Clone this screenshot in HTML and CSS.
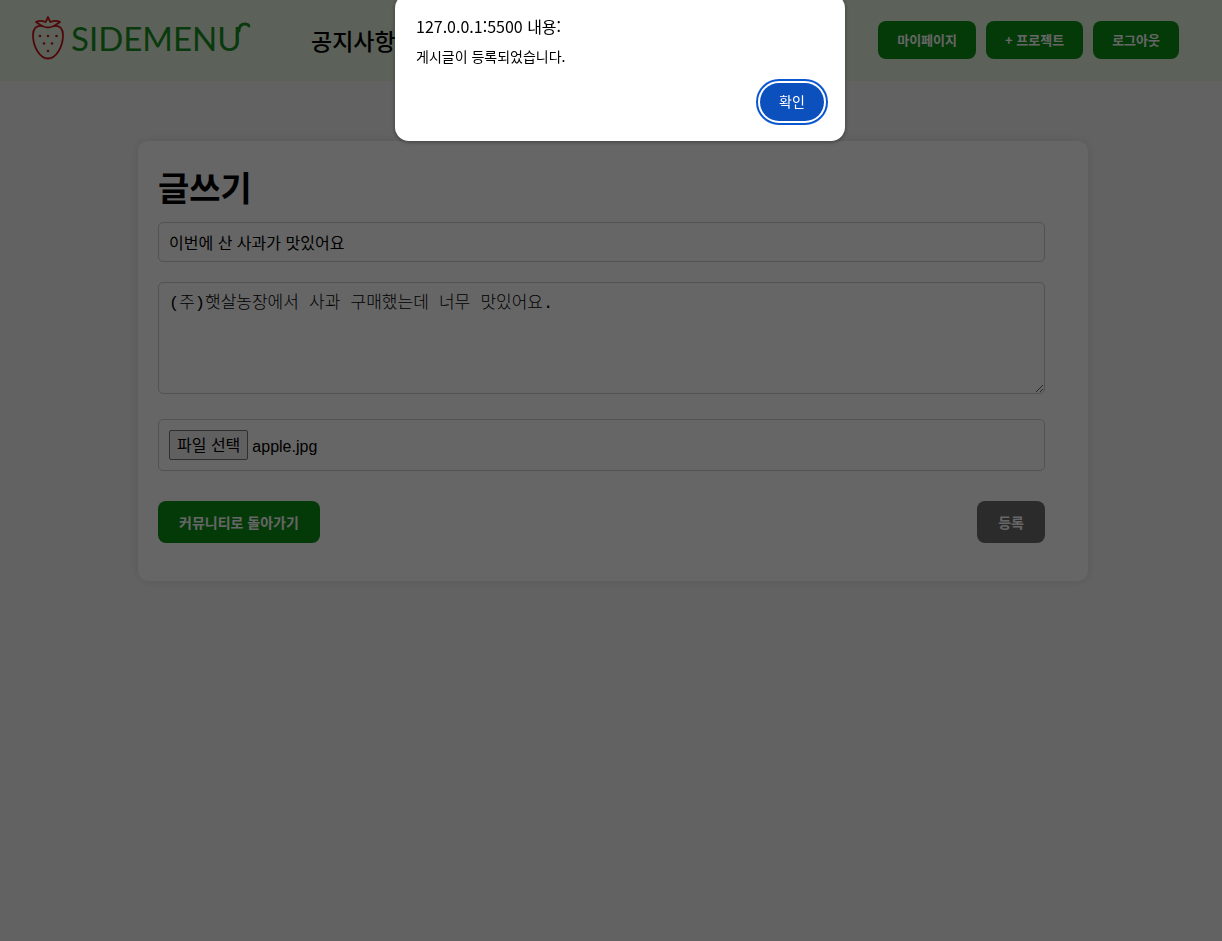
FILE: index.html
```
<!DOCTYPE html>
<html lang="ko">
<head>
<meta charset="utf-8">
<meta name="viewport" content="width=device-width, initial-scale=1">
<title>글쓰기</title>
<link rel="stylesheet" href="styles.css">
</head>
<body>
<header class="header">
  <a class="logo" href="#" aria-label="SIDEMENU">
    <svg class="logo-image" viewBox="0 0 220 50" width="220" height="50" fill="none" stroke-linecap="round" stroke-linejoin="round">
      <g stroke="#c8171c" stroke-width="1.8">
        <path d="M11 11 C5 10 2 14 2 20 C2 32 9 43.5 17 43.5 C25 43.5 32 32 32 20 C32 14 29 10 23 11 C20 12 19 12.5 17 12.5 C15 12.5 14 12 11 11Z"/>
        <path d="M11 11 L5 7 C8 5.5 11 5.5 14.5 7 C15.5 5 16.5 4 17 2 C17.5 4 18.5 5 19.5 7 C23 5.5 26 5.5 29 7 L23 11"/>
      </g>
      <g fill="#c8171c">
        <circle cx="9" cy="21" r="1.3"/><circle cx="17" cy="21" r="1.3"/><circle cx="25.5" cy="21" r="1.3"/>
        <circle cx="13" cy="28.5" r="1.3"/><circle cx="21" cy="28.5" r="1.3"/><circle cx="17" cy="36" r="1.3"/>
      </g>
      <text class="logo-text" x="40" y="36">SIDEMENU</text>
      <path d="M208 16 C208 10.500 211 9 214 9 Q217 9 218 11" stroke="#1a9025" stroke-width="2.8"/>
    </svg>
  </a>
  <nav class="nav"><a href="#">공지사항</a></nav>
  <div class="account">
    <button class="button button-small" type="button">마이페이지</button>
    <button class="button button-small" type="button">+ 프로젝트</button>
    <button class="button button-small" type="button">로그아웃</button>
  </div>
</header>
<main class="main">
  <form class="card">
    <h1 class="title">글쓰기</h1>
    <input class="field" type="text" aria-label="제목" value="이번에 산 사과가 맛있어요">
    <textarea class="field content" aria-label="내용">(주)햇살농장에서 사과 구매했는데 너무 맛있어요.</textarea>
    <div class="field file">
      <input class="file-input" id="file" type="file" aria-label="파일">
      <label class="file-button" for="file">파일 선택</label>
      <span class="file-name">apple.jpg</span>
    </div>
    <div class="actions">
      <button class="button" type="button">커뮤니티로 돌아가기</button>
      <button class="button button-submit" type="submit">등록</button>
    </div>
  </form>
</main>
<div class="backdrop"></div>
<div class="alert" role="alertdialog" aria-labelledby="alert-title" aria-describedby="alert-message">
  <h2 class="alert-title" id="alert-title">127.0.0.1:5500 내용:</h2>
  <p class="alert-message" id="alert-message">게시글이 등록되었습니다.</p>
  <button class="alert-confirm" type="button">확인</button>
</div>
</body>
</html>
```
FILE: styles.css
```
* {
  box-sizing: border-box;
}

body {
  margin: 0;
  min-height: 100vh;
  background: #f5f5f5;
  color: #000;
  font-family: "Noto Sans CJK KR", sans-serif;
}

button,
input {
  font-family: inherit;
}

.header {
  display: flex;
  align-items: center;
  height: 81px;
  padding: 0 43px 2px 31px;
  background: #e6f5de;
}

.logo {
  display: block;
  height: 50px;
}

.logo-image {
  display: block;
}

.logo-text {
  fill: #1a9025;
  font: 33px Lato, sans-serif;
}

.nav {
  margin-left: 60px;
}

.nav a {
  color: #000;
  font-size: 23px;
  font-weight: 500;
  text-decoration: none;
}

.account {
  display: flex;
  gap: 10px;
  margin-left: auto;
}

.button {
  height: 42px;
  padding: 0 21px;
  border: 0;
  border-radius: 8px;
  background: #0a9015;
  color: #fff;
  font-size: 14px;
  font-weight: 700;
}

.button-small {
  height: 38px;
  padding: 0 19px;
  font-size: 13px;
}

.main {
  padding: 60px 0 0 4px;
}

.card {
  max-width: 950px;
  margin: 0 auto;
  padding: 20px 43px 38px 20px;
  border-radius: 10px;
  background: #fff;
  box-shadow: 0 0 10px rgba(0, 0, 0, 0.1);
}

.title {
  margin: 0 0 9px;
  font-size: 34px;
  font-weight: 700;
  line-height: 52px;
}

.field {
  display: block;
  width: 100%;
  height: 40px;
  margin: 0 0 20px;
  padding: 0 10px;
  border: 1px solid #ccc;
  border-radius: 5px;
  background: #fff;
  color: #000;
  font-size: 16px;
}

.content {
  height: 112px;
  margin-bottom: 25px;
  padding: 10px;
  font-family: "Liberation Mono", "Noto Sans CJK KR", monospace;
  font-size: 17px;
  font-weight: 300;
  line-height: 22px;
  resize: vertical;
}

.file {
  display: flex;
  align-items: center;
  gap: 4px;
  height: 52px;
  margin-bottom: 30px;
  font-family: "Liberation Sans", "Noto Sans CJK KR", sans-serif;
}

.file-input {
  position: absolute;
  width: 1px;
  height: 1px;
  opacity: 0;
}

.file-button {
  padding: 2px 7px 0;
  border: 1px solid #767676;
  border-radius: 2px;
  background: #efefef;
  line-height: 26px;
}

.file-name {
  padding-top: 3px;
}

.actions {
  display: flex;
  justify-content: space-between;
}

.button-submit {
  background: #6c6c6c;
}

.backdrop {
  position: fixed;
  inset: 0;
  background: rgba(0, 0, 0, 0.6);
}

.alert {
  position: fixed;
  top: -6px;
  left: calc(50% - 216px);
  display: flex;
  flex-direction: column;
  width: 450px;
  padding: 20px 21px;
  border-radius: 14px;
  background: #fff;
  box-shadow: 0 1px 4px rgba(0, 0, 0, 0.4);
}

.alert-title {
  margin: 0;
  font-size: 16px;
  font-weight: 400;
  line-height: 24px;
}

.alert-message {
  margin: 8px 0 17px;
  font-size: 14px;
  line-height: 20px;
}

.alert-confirm {
  align-self: flex-end;
  width: 64px;
  height: 38px;
  padding: 0 0 2px;
  border: 0;
  border-radius: 19px;
  outline: 2px solid #0b57d0;
  outline-offset: 2px;
  background: #0b50bd;
  color: #fff;
  font-size: 14px;
}
```
